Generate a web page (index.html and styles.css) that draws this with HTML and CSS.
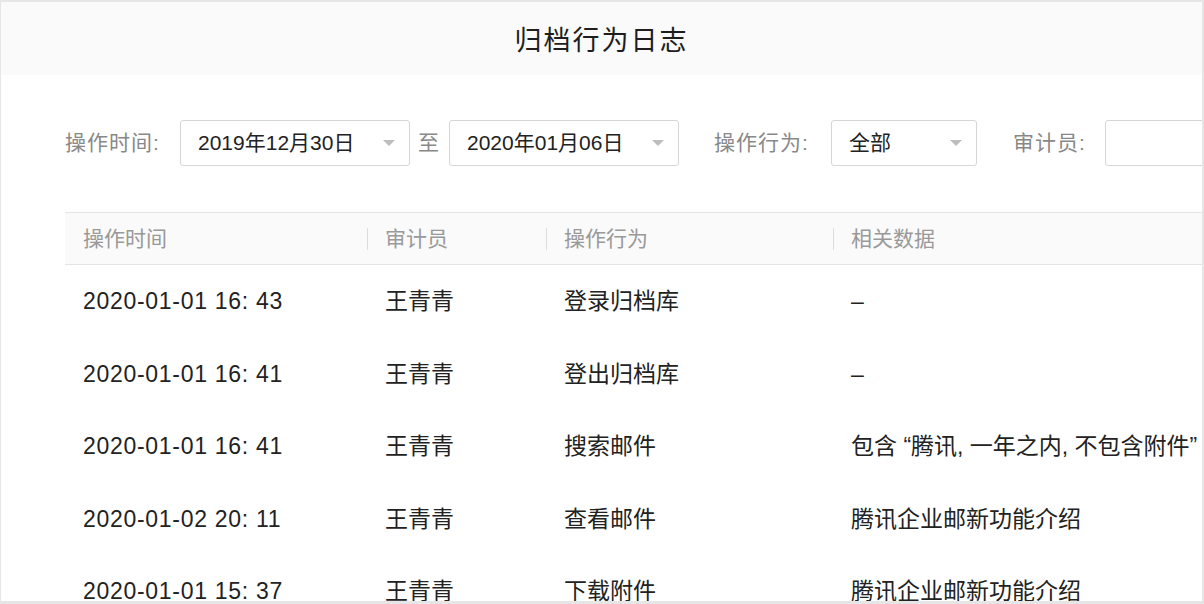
FILE: index.html
```html
<!DOCTYPE html>
<html lang="zh-CN">
<head>
  <meta charset="UTF-8">
  <meta name="viewport" content="width=device-width, initial-scale=1.0">
  <title>归档行为日志</title>
  <link rel="stylesheet" href="styles.css">
</head>
<body>
  <div class="window">
    <header class="title-bar">
      <h1>归档行为日志</h1>
    </header>

    <div class="filters">
      <span class="label first">操作时间:</span>
      <div class="field date">
        <span>2019年12月30日</span><i class="arrow"></i>
      </div>
      <span class="to">至</span>
      <div class="field date">
        <span>2020年01月06日</span><i class="arrow"></i>
      </div>
      <span class="label act">操作行为:</span>
      <div class="field action">
        <span>全部</span><i class="arrow"></i>
      </div>
      <span class="label aud">审计员:</span>
      <div class="field auditor"></div>
    </div>

    <div class="table">
      <div class="row head">
        <div class="cell c1">操作时间</div>
        <div class="cell c2">审计员</div>
        <div class="cell c3">操作行为</div>
        <div class="cell c4">相关数据</div>
      </div>
      <div class="row">
        <div class="cell c1 num">2020-01-01 16: 43</div>
        <div class="cell c2">王青青</div>
        <div class="cell c3">登录归档库</div>
        <div class="cell c4">–</div>
      </div>
      <div class="row">
        <div class="cell c1 num">2020-01-01 16: 41</div>
        <div class="cell c2">王青青</div>
        <div class="cell c3">登出归档库</div>
        <div class="cell c4">–</div>
      </div>
      <div class="row">
        <div class="cell c1 num">2020-01-01 16: 41</div>
        <div class="cell c2">王青青</div>
        <div class="cell c3">搜索邮件</div>
        <div class="cell c4">包含 “腾讯, 一年之内, 不包含附件”</div>
      </div>
      <div class="row">
        <div class="cell c1 num">2020-01-02 20: 11</div>
        <div class="cell c2">王青青</div>
        <div class="cell c3">查看邮件</div>
        <div class="cell c4">腾讯企业邮新功能介绍</div>
      </div>
      <div class="row">
        <div class="cell c1 num">2020-01-01 15: 37</div>
        <div class="cell c2">王青青</div>
        <div class="cell c3">下载附件</div>
        <div class="cell c4">腾讯企业邮新功能介绍</div>
      </div>
    </div>
  </div>
</body>
</html>
```

FILE: styles.css
```css
html, body { margin: 0; padding: 0; }
body {
  background: #e6e6e6;
  padding: 2px 2px 3px 1px;
  font-family: "Liberation Sans", "Noto Sans CJK SC", sans-serif;
  color: #222;
}
.window { background: #fff; height: 599px; overflow: hidden; }

.title-bar { background: #fafafa; height: 73px; display: flex; align-items: center; justify-content: center; }
.title-bar h1 { margin: 0; font-size: 27px; font-weight: normal; color: #1e1e1e; letter-spacing: 2px; }

.filters { display: flex; align-items: center; padding: 45px 0 0 64px; white-space: nowrap; }
.label { font-size: 21px; line-height: 30px; color: #888; letter-spacing: 1px; flex-shrink: 0; }
.label.first { width: 96px; margin-right: 19px; }
.label.act { width: 96px; margin: 0 21px 0 35px; }
.label.aud { width: 74px; margin: 0 18px 0 36px; }
.to { font-size: 21px; line-height: 30px; color: #888; margin: 0 10px 0 8px; }
.field {
  box-sizing: border-box; height: 46px; border: 1px solid #d6d6d6; border-radius: 3px;
  display: flex; align-items: center; justify-content: space-between;
  padding: 0 14px 0 17px; font-size: 21px; line-height: 30px; color: #222; flex-shrink: 0;
}
.field.date { width: 230px; }
.field.action { width: 146px; }
.field.auditor { width: 200px; }
.arrow { width: 0; height: 0; border-left: 6px solid transparent; border-right: 6px solid transparent; border-top: 6px solid #bdbdbd; }

.table { margin: 46px 0 0 64px; width: 1200px; }
.row { display: flex; height: 72.5px; align-items: center; font-size: 23px; line-height: 32px; }
.row.head { height: 51px; background: #fafafa; border-top: 1px solid #e4e4e4; border-bottom: 1px solid #e4e4e4; color: #999; font-size: 21px; }
.cell { box-sizing: border-box; padding-left: 18px; white-space: nowrap; position: relative; }
.cell.num { letter-spacing: 0.7px; }
.c1 { width: 302px; }
.c2 { width: 179px; }
.c3 { width: 287px; }
.c4 { flex: 1; }
.head .c2::before, .head .c3::before, .head .c4::before {
  content: ""; position: absolute; left: 0; top: 50%; margin-top: -11px;
  width: 1px; height: 22px; background: #ddd;
}
```
